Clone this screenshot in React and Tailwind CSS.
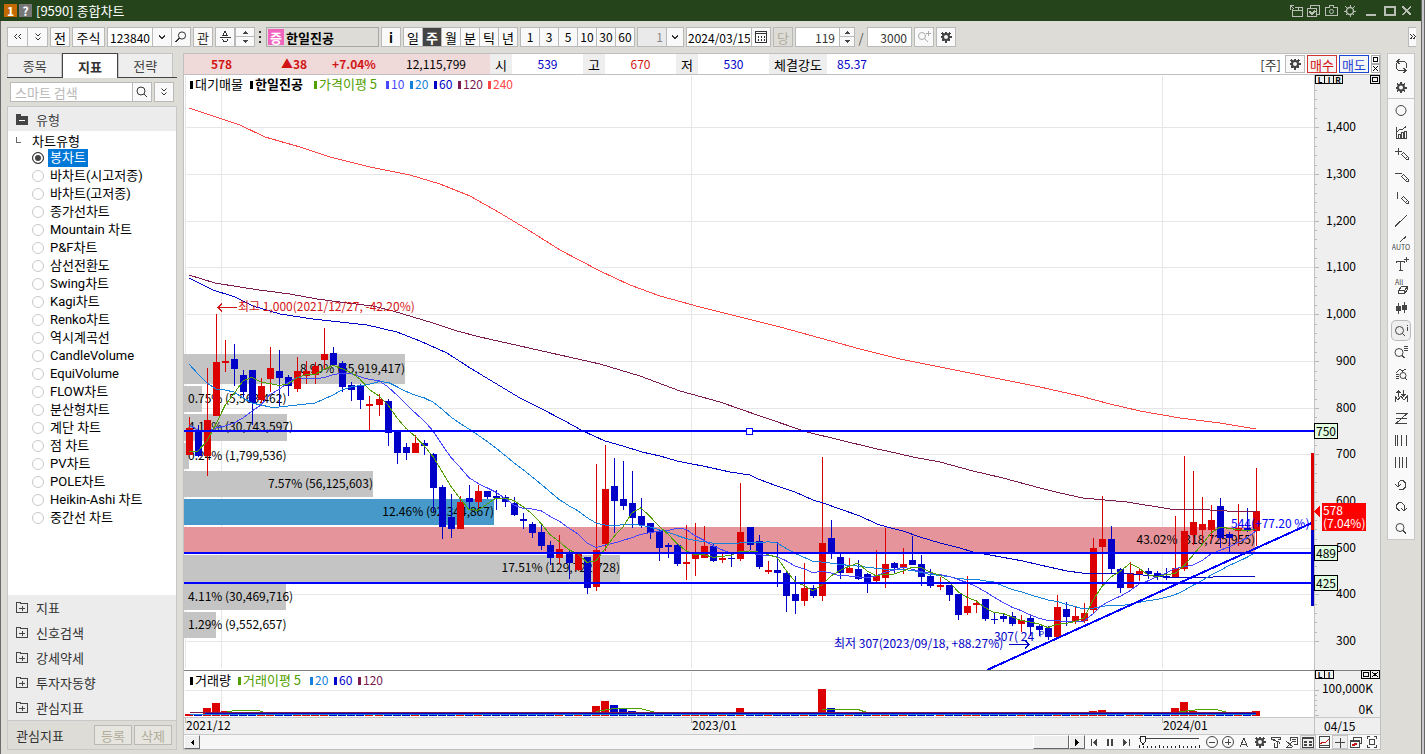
import { useState } from 'react';

const chartTypes = [
  '봉차트', '바차트(시고저종)', '바차트(고저종)', '종가선차트', 'Mountain 차트', 'P&F차트', '삼선전환도',
  'Swing차트', 'Kagi차트', 'Renko차트', '역시계곡선', 'CandleVolume', 'EquiVolume', 'FLOW차트',
  '분산형차트', '계단 차트', '점 차트', 'PV차트', 'POLE차트', 'Heikin-Ashi 차트', '중간선 차트',
];

const folders = ['지표', '신호검색', '강세약세', '투자자동향', '관심지표'];

// [up, high, low, body top, body bottom]
const candles = [
  [1, 417, 455, 428, 455], [0, 425, 457, 430, 456], [1, 368, 476, 420, 456], [1, 314, 416, 362, 416],
  [1, 340, 372, 361, 363], [0, 344, 386, 359, 369], [0, 370, 397, 375, 392], [0, 370, 425, 370, 403],
  [1, 378, 403, 386, 400], [1, 347, 392, 368, 379], [0, 350, 406, 371, 378], [0, 375, 396, 377, 386],
  [1, 357, 392, 371, 389], [1, 361, 384, 371, 376], [1, 362, 384, 366, 375], [1, 328, 369, 354, 360],
  [0, 347, 365, 353, 365], [0, 361, 392, 363, 387], [0, 382, 401, 385, 390], [0, 384, 409, 386, 400],
  [1, 396, 430, 404, 406], [1, 394, 416, 399, 405], [0, 399, 446, 401, 433], [0, 430, 464, 432, 453],
  [0, 443, 460, 447, 453], [1, 435, 453, 443, 453], [0, 440, 455, 443, 446], [0, 453, 512, 454, 488],
  [0, 485, 539, 487, 527], [0, 494, 538, 517, 529], [1, 496, 529, 502, 529], [0, 485, 509, 498, 502],
  [1, 485, 508, 491, 502], [0, 491, 499, 491, 497], [0, 490, 510, 496, 498], [0, 495, 507, 497, 502],
  [0, 497, 516, 503, 515], [0, 513, 529, 519, 521], [0, 522, 538, 524, 533], [0, 525, 550, 532, 546],
  [0, 541, 565, 545, 558], [1, 535, 564, 549, 558], [0, 549, 579, 552, 563], [1, 554, 571, 554, 570],
  [0, 557, 594, 557, 588], [1, 464, 591, 550, 587], [1, 445, 551, 489, 544], [0, 458, 533, 486, 501],
  [0, 461, 510, 499, 506], [0, 471, 528, 503, 518], [0, 498, 528, 516, 525], [0, 523, 539, 523, 533],
  [0, 530, 561, 531, 548], [0, 543, 558, 545, 547], [0, 544, 566, 545, 564], [1, 525, 580, 562, 564],
  [1, 523, 576, 554, 559], [1, 526, 558, 546, 558], [0, 543, 562, 546, 561], [1, 554, 563, 558, 560],
  [0, 554, 567, 558, 559], [1, 483, 561, 532, 559], [0, 527, 550, 527, 545], [0, 535, 569, 541, 567],
  [1, 561, 574, 570, 572], [0, 542, 587, 570, 573], [0, 572, 612, 573, 596], [0, 576, 614, 594, 601],
  [1, 563, 606, 588, 601], [0, 585, 598, 588, 596], [1, 457, 601, 543, 596], [0, 520, 559, 538, 552],
  [0, 554, 579, 557, 573], [1, 558, 573, 568, 573], [0, 560, 580, 569, 579], [0, 573, 593, 574, 583],
  [1, 550, 582, 576, 581], [1, 528, 588, 564, 578], [0, 562, 573, 563, 568], [1, 548, 574, 564, 568],
  [0, 536, 565, 560, 565], [0, 555, 586, 564, 577], [0, 569, 588, 576, 586], [1, 577, 590, 585, 587],
  [0, 585, 601, 585, 595], [0, 594, 620, 594, 615], [1, 576, 615, 606, 613], [1, 600, 613, 603, 605],
  [0, 599, 621, 599, 619], [0, 613, 624, 619, 620], [0, 613, 622, 616, 619], [0, 612, 626, 616, 624],
  [1, 615, 632, 620, 624], [0, 616, 636, 618, 627], [0, 625, 636, 626, 630], [0, 626, 640, 628, 637],
  [1, 595, 637, 607, 637], [0, 602, 626, 609, 617], [1, 607, 624, 616, 622], [1, 603, 623, 613, 621],
  [1, 538, 613, 548, 610], [1, 496, 585, 539, 547], [0, 526, 573, 539, 569], [0, 568, 593, 569, 588],
  [1, 562, 588, 573, 588], [1, 568, 581, 571, 575], [0, 568, 579, 571, 574], [0, 571, 580, 573, 577],
  [0, 568, 580, 576, 578], [1, 516, 578, 568, 578], [1, 456, 571, 531, 569], [1, 471, 545, 522, 535],
  [1, 497, 544, 524, 530], [1, 505, 540, 520, 530], [0, 498, 548, 506, 538], [0, 532, 552, 534, 538],
  [1, 504, 546, 528, 531], [0, 508, 532, 528, 530], [1, 468, 546, 511, 531],
];

const barX = (i) => 189 + Math.floor(i * 9.0484);
const closes = candles.map(([up, , , top, bottom]) => (up ? top : bottom));

// the first values come from bars that are not on the screen any more
const average = (n, head) =>
  closes
    .map((_, i) => {
      const y = i < head.length ? head[i] : closes.slice(i - n + 1, i + 1).reduce((a, b) => a + b, 0) / n;
      return `${barX(i)},${y.toFixed(1)}`;
    })
    .join(' ');

const ma5 = average(5, [451, 451, 441, 424]);
const ma10 = average(10, [425, 430, 432, 428, 426, 423, 418, 411, 405]);
const ma20 = average(20, [364, 374, 383, 389, 390, 392, 398, 403, 405, 407, 407, 406, 405, 404, 403, 399, 395, 390, 387]);
const ma60 =
  '189,278 213,290 235,297 253,306 280,314 313,319 340,322 367,325 397,332 420,341 447,353 467,366 480,374 500,386 520,398 540,408 563,420 583,431 605,441 623,446 642,452 660,456 677,461 692,464 703,466 730,472 750,475 758,479 777,486 795,492 813,500 823,503 840,509 860,516 877,524 887,527 903,531 920,537 940,543 960,548 973,552 990,555 1023,561 1040,565 1067,571 1082,573 1123,573 1143,575 1163,577 1183,578 1213,577 1256,576';
const ma120 =
  '189,275 215,283 240,287 259,290 290,294 317,299 347,303 373,306 393,311 413,317 433,323 457,331 480,337 520,346 560,355 600,364 640,376 680,391 720,402 760,416 807,432 840,440 877,449 887,451 913,457 940,462 973,471 1003,478 1040,488 1060,493 1083,498 1127,502 1170,509 1193,509 1227,511 1256,511';
const ma240 =
  '189,108 210,115 240,125 265,137 300,147 330,157 370,167 410,175 440,184 470,196 500,213 530,231 560,250 600,271 630,285 660,296 700,307 740,317 780,327 820,338 860,349 900,359 940,367 990,377 1040,387 1080,396 1110,404 1140,411 1180,418 1220,423 1256,429';

const lines = [
  { color: '#ff4646', points: ma240 },
  { color: '#7d1a50', points: ma120 },
  { color: '#0000c8', points: ma60 },
  { color: '#1482dc', points: ma20 },
  { color: '#4646ff', points: ma10 },
  { color: '#50a000', points: ma5 },
];

const profile = [
  { y: 354, h: 30, end: 405, color: '#c4c4c4', text: '8.90% (65,919,417)', base: 373 },
  { y: 386, h: 26, end: 202, color: '#c4c4c4', text: '0.75% (5,563,462)', base: 403 },
  { y: 414, h: 27, end: 287, color: '#c4c4c4', text: '4.16% (30,743,597)', base: 431 },
  { y: 443, h: 26, end: 189, color: '#c4c4c4', text: '0.24% (1,799,536)', base: 460 },
  { y: 471, h: 26, end: 373, color: '#c4c4c4', text: '7.57% (56,125,603)', base: 488 },
  { y: 499, h: 26, end: 494, color: '#4699c8', text: '12.46% (92,344,867)', base: 516 },
  { y: 527, h: 26, end: 1255, color: '#e6949b', text: '43.02% (318,725,955)', base: 544 },
  { y: 555, h: 27, end: 620, color: '#c4c4c4', text: '17.51% (129,722,728)', base: 572 },
  { y: 584, h: 26, end: 286, color: '#c4c4c4', text: '4.11% (30,469,716)', base: 601 },
  { y: 612, h: 26, end: 216, color: '#c4c4c4', text: '1.29% (9,552,657)', base: 629 },
];

const priceAxis = [
  [127, '1,400'], [174, '1,300'], [221, '1,200'], [267, '1,100'], [314, '1,000'], [361, '900'],
  [408, '800'], [454, '700'], [501, '600'], [548, '500'], [594, '400'], [641, '300'],
];

const volumes = {
  2: 8, 3: 13, 4: 5, 5: 4, 6: 3, 9: 3, 15: 4, 16: 3, 28: 3, 45: 10, 46: 15, 47: 11, 48: 8, 49: 5, 50: 3,
  61: 8, 62: 4, 70: 27, 71: 8, 72: 3, 77: 4, 80: 3, 96: 4, 100: 5, 101: 6, 109: 8, 110: 14, 111: 5,
  112: 3, 113: 3, 114: 3, 115: 3, 116: 3, 117: 3, 118: 5,
};

const priceLegend = [
  [190, '대기매물', '#000000'], [250, '한일진공', '#000000', true], [314, '가격이평 5', '#50a000'],
  [386, '10', '#4646ff'], [410, '20', '#1482dc'], [434, '60', '#0000c8'], [458, '120', '#7d1a50'],
  [488, '240', '#ff4646'],
];

const volumeLegend = [
  [190, '거래량', '#000000'], [238, '거래이평 5', '#50a000'], [310, '20', '#1482dc'],
  [334, '60', '#0000c8'], [358, '120', '#7d1a50'],
];

const Ico = ({ children, w = 16, h = 16, className = '' }) => (
  <svg
    width={w}
    height={h}
    viewBox={`0 0 ${w} ${h}`}
    fill="none"
    stroke="currentColor"
    shapeRendering="crispEdges"
    className={`shrink-0 [&_circle]:[shape-rendering:auto] ${className}`}
    aria-hidden="true"
  >
    {children}
  </svg>
);

const Gear = () => (
  <Ico w={12} h={12}>
    <path d="M6 0.5V11.5M0.5 6H11.5M2 2L10 10M10 2L2 10" strokeWidth="2" />
    <circle cx="6" cy="6" r="3" strokeWidth="2" fill="#f9f9f9" />
  </Ico>
);

const Lens = () => (
  <Ico w={12} h={12}>
    <circle cx="5" cy="5" r="4" />
    <path d="M8 8L11.5 11.5" />
  </Ico>
);

// search lens with the handle on the left
const LensLeft = () => (
  <Ico w={12} h={12}>
    <circle cx="7" cy="4.5" r="3.6" />
    <path d="M4.5 7L0.5 11" />
  </Ico>
);

const Chevron = () => (
  <Ico w={10} h={10}>
    <path d="M2 3.5L5 6.5L8 3.5" strokeWidth="2" />
  </Ico>
);

const DoubleDown = () => (
  <Ico w={6} h={8} className="[shape-rendering:auto]">
    <path d="M0.5 0.5L3 3L5.5 0.5M0.5 4.5L3 7L5.5 4.5" />
  </Ico>
);

const ToolButton = ({ label, className = '', children }) => (
  <button
    aria-label={label}
    className={`flex h-5 shrink-0 items-center justify-center border border-[#b9b9b9] bg-[#f9f9f9] text-[#333] ${className}`}
  >
    {children}
  </button>
);

const Spinner = ({ label, className }) => (
  <div className={`flex h-5 shrink-0 flex-col ${className}`}>
    <button aria-label={`${label} +`} className="flex h-2.5 items-center justify-center border border-[#b9b9b9] bg-[#f9f9f9] text-[#444]">
      <Ico w={8} h={4}><path d="M1 4L4 1L7 4Z" fill="currentColor" stroke="none" /></Ico>
    </button>
    <button aria-label={`${label} -`} className="flex h-2.5 items-center justify-center border border-t-0 border-[#b9b9b9] bg-[#f9f9f9] text-[#444]">
      <Ico w={8} h={4}><path d="M1 0L4 3L7 0Z" fill="currentColor" stroke="none" /></Ico>
    </button>
  </div>
);

const TitleBar = () => (
  <header className="flex h-[21px] items-center bg-[#25441c] pr-2 pl-1 text-white">
    <span className="flex size-[13px] items-center justify-center bg-[#c46a00] text-xs leading-none font-bold">1</span>
    <button className="ml-0.5 flex size-[13px] items-center justify-center bg-[#777] text-xs leading-none font-bold">?</button>
    <h1 className="ml-1 text-[13px] leading-5">[9590] 종합차트</h1>
    <div className="ml-auto flex items-center gap-1 text-[#b9bfb5]">
      <button aria-label="분리">
        <Ico w={14} h={12}><path d="M3 4V11.5H13.5V2.5H6M3.5 5.5H13M9.5 3V5M1.5 5V0.5H5M1.5 0.5L5 4" /></Ico>
      </button>
      <button aria-label="저장">
        <Ico w={14} h={12}><path d="M0.5 3.5H9.5V11.5H0.5ZM3.5 3V0.5H12.5V9.5H10" /><path d="M2.5 6.5L5 9L8 6" strokeWidth="2" /></Ico>
      </button>
      <button aria-label="캡처">
        <Ico w={14} h={12}><path d="M0.5 2.5H4.5V0.5H8.5V2.5H12.5V10.5H0.5Z" /><circle cx="6.5" cy="6.5" r="2" /></Ico>
      </button>
      <button aria-label="설정">
        <Ico w={14} h={12}><circle cx="7" cy="6" r="3.5" strokeWidth="1.5" /><path d="M7 0V2M7 10V12M1 6H3M11 6H13M2.5 1.5L4 3M10 9L11.5 10.5M11.5 1.5L10 3M2.5 10.5L4 9" /></Ico>
      </button>
      <button aria-label="최소화" className="ml-1">
        <Ico w={12} h={12}><path d="M1 10H11" strokeWidth="2" /></Ico>
      </button>
      <button aria-label="최대화" className="ml-0.5">
        <Ico w={14} h={12}><path d="M2 2H12V10H2Z" strokeWidth="2" /></Ico>
      </button>
      <button aria-label="닫기">
        <Ico w={12} h={12}><path d="M1.5 1.5L10 10M10 1.5L1.5 10" strokeWidth="2" /></Ico>
      </button>
    </div>
  </header>
);

const TopToolbar = () => {
  const [period, setPeriod] = useState('주');
  return (
    <div className="flex h-8 items-center gap-0.5 px-1.5 text-[13px] leading-none">
      <div className="flex">
        <ToolButton label="이전" className="w-[21px]"><Ico w={10} h={8} className="[shape-rendering:auto]"><path d="M4 1L1.5 3.5L4 6M8 1L5.5 3.5L8 6" /></Ico></ToolButton>
        <ToolButton label="아래로" className="-ml-px w-[21px]"><DoubleDown /></ToolButton>
      </div>
      <ToolButton className="w-5 text-black">전</ToolButton>
      <ToolButton className="w-[33px] text-black">주식</ToolButton>
      <div className="flex">
        <input aria-label="종목코드" defaultValue="123840" className="h-5 w-[46px] border border-[#b9b9b9] bg-white px-0.5 text-xs text-black" />
        <ToolButton label="종목 목록" className="-ml-px w-5"><Chevron /></ToolButton>
        <ToolButton label="종목 검색" className="-ml-px w-5"><LensLeft /></ToolButton>
      </div>
      <ToolButton className="w-5">관</ToolButton>
      <div className="flex">
        <ToolButton label="알림" className="w-5">
          <Ico w={12} h={12}><path d="M6 0.5L3.5 4.5H8.5ZM0.5 6.5H11.5M3.5 8.5L5 10.5H7.5L9 8.5" /></Ico>
        </ToolButton>
        <Spinner label="종목" className="w-5" />
        <ToolButton label="더보기" className="w-[9px] border-0 bg-transparent">
          <Ico w={4} h={14}><path d="M1 2H3M1 7H3M1 12H3" strokeWidth="2" /></Ico>
        </ToolButton>
      </div>
      <button className="flex h-5 w-[113px] shrink-0 items-center gap-0.5 border border-[#a8a8a8] bg-[#dddcd6] px-px font-bold text-black">
        <span className="flex size-4 items-center justify-center bg-[#f064be] text-white">증</span>
        한일진공
      </button>
      <ToolButton className="w-5 font-bold text-black">i</ToolButton>
      <div className="flex">
        {['일', '주', '월', '분', '틱', '년'].map((p, i) => (
          <button
            key={p}
            onClick={() => setPeriod(p)}
            className={`h-5 w-5 border border-[#b9b9b9] text-center ${i ? '-ml-px' : ''} ${period === p ? 'bg-[#444] font-bold text-white' : 'bg-[#f9f9f9] text-black'}`}
          >
            {p}
          </button>
        ))}
      </div>
      <div className="flex">
        {['1', '3', '5', '10', '30', '60'].map((n, i) => (
          <button key={n} className={`h-5 w-5 border border-[#b9b9b9] bg-[#f9f9f9] text-center text-xs leading-none text-black ${i ? '-ml-px' : ''}`}>
            {n}
          </button>
        ))}
      </div>
      <div className="relative flex">
        <select aria-label="주기" className="h-5 w-[47px] appearance-none border border-[#b9b9b9] bg-[#eaeaea] pr-5 text-xs text-[#888] [text-align-last:right]">
          <option>1</option>
        </select>
        <span className="pointer-events-none absolute right-0 flex h-5 w-[18px] items-center justify-center border border-[#b9b9b9] bg-[#f9f9f9] text-[#333]">
          <Chevron />
        </span>
      </div>
      <div className="flex">
        <input aria-label="날짜" defaultValue="2024/03/15" className="h-5 w-[66px] border border-[#b9b9b9] bg-white px-px text-xs text-black" />
        <ToolButton label="달력" className="-ml-px w-5">
          <Ico w={12} h={12}><path d="M0.5 0.5H11.5V11.5H0.5ZM0.5 2.5H11.5" /><path d="M3 5.5H10M3 8.5H10" strokeDasharray="1 2" strokeWidth="2" /></Ico>
        </ToolButton>
      </div>
      <ToolButton className="w-5 bg-transparent text-[#b0aca0]">당</ToolButton>
      <div className="flex">
        <input aria-label="봉 개수" defaultValue="119" className="h-5 w-[45px] border border-[#b9b9b9] bg-white px-1 text-right text-xs text-[#333]" />
        <Spinner label="봉 개수" className="-ml-px w-4" />
      </div>
      <span className="w-2 text-center text-[#555]">/</span>
      <input aria-label="전체 봉" defaultValue="3000" className="h-5 w-[45px] shrink-0 border border-[#b9b9b9] bg-white px-1 text-right text-xs text-[#333]" />
      <ToolButton label="확대" className="w-5 bg-[#efefef] text-[#aaa]">
        <Ico w={14} h={14}><circle cx="5" cy="6" r="3.5" /><path d="M7.5 8.5L11 12M11.5 1V6M9 3.5H14" /></Ico>
      </ToolButton>
      <ToolButton label="차트 설정" className="w-5 text-[#444]"><Gear /></ToolButton>
      <button aria-label="더 보기" className="-mr-px ml-auto flex h-5 w-2 items-center justify-center border border-r-0 border-[#b9b9b9] bg-[#f9f9f9] text-[#333]">
        <Ico w={6} h={6}><path d="M0.5 0.5L2.5 2.5L0.5 5M3.5 0.5L5.5 2.5L3.5 5" /></Ico>
      </button>
    </div>
  );
};

const Sidebar = () => {
  const [selected, setSelected] = useState('봉차트');
  return (
    <aside className="flex w-[170px] shrink-0 flex-col text-[13px] leading-none">
      <div role="tablist" className="flex h-[25px] border-b border-[#444] pr-1">
        <button role="tab" className="flex-1 border border-b-0 border-[#c4c4c4] bg-[#eee] text-[#444]">종목</button>
        <button role="tab" aria-selected="true" className="-mb-px flex-1 border border-b-0 border-[#444] bg-white font-bold text-[#333]">지표</button>
        <button role="tab" className="flex-1 border border-b-0 border-[#c4c4c4] bg-[#eee] text-[#444]">전략</button>
      </div>
      <div className="flex gap-0.5 px-[3px] py-1">
        <div className="flex flex-1">
          <input aria-label="스마트 검색" placeholder="스마트 검색" className="h-5 w-0 flex-1 border border-[#b9b9b9] bg-white px-1 placeholder:text-[#b8b8b8]" />
          <ToolButton label="검색" className="-ml-px w-5"><Lens /></ToolButton>
        </div>
        <ToolButton label="펼치기" className="w-5"><DoubleDown /></ToolButton>
      </div>
      <div className="flex flex-1 flex-col border border-[#c8c8c8] bg-white">
        <button className="flex h-6 items-center gap-2 bg-[#ececec] pl-2 text-[#444]">
          <svg width="12" height="11" viewBox="0 0 12 11" shapeRendering="crispEdges" aria-hidden="true">
            <path d="M0 0H5V2H12V11H0Z" fill="#444" />
            <path d="M3 6H9V7H3Z" fill="#fff" />
          </svg>
          유형
        </button>
        <div className="flex-1 text-black">
          <div className="flex h-[18px] items-center gap-2.5 pl-2">
            <Ico w={6} h={6} className="text-[#666]"><path d="M0.5 0V5.5H5" /></Ico>
            <span>차트유형</span>
          </div>
          {chartTypes.map((name) => (
            <label key={name} className="flex h-[18px] items-center gap-1 pl-6 font-[Roboto,'Noto_Sans_CJK_KR',sans-serif]">
              <input
                type="radio"
                name="chart-type"
                checked={selected === name}
                onChange={() => setSelected(name)}
                className="size-3 shrink-0 appearance-none rounded-full border border-[#c8c8c8] bg-white checked:border-[#333] checked:bg-[#444] checked:shadow-[inset_0_0_0_2px_white]"
              />
              <span className={`h-[18px] px-0.5 leading-[17px] whitespace-nowrap ${selected === name ? 'bg-[#0078d7] text-white' : ''}`}>
                {name}
              </span>
            </label>
          ))}
        </div>
        <div className="bg-[#ececec]">
          {folders.map((name) => (
            <button key={name} className="flex h-[25px] w-full items-center gap-2 pl-2 text-[#333]">
              <Ico w={12} h={12} className="text-[#444]"><path d="M0.5 0.5H4.5V1.5H11.5V10.5H0.5ZM3 6H9M6 3.5V9" /></Ico>
              {name}
            </button>
          ))}
        </div>
        <div className="flex h-[29px] items-center gap-0.5 border-t border-[#c8c8c8] bg-[#dddcd6] pr-1 pl-2 text-[#333]">
          <span className="mr-auto">관심지표</span>
          <button disabled className="h-5 w-[38px] border border-[#b9b9b9] bg-[#e6e5e0] text-[#b0ac98]">등록</button>
          <button disabled className="h-5 w-[38px] border border-[#b9b9b9] bg-[#e6e5e0] text-[#b0ac98]">삭제</button>
        </div>
      </div>
    </aside>
  );
};

const Quote = ({ label, value, className }) => (
  <>
    <dt className="flex w-[22px] items-center justify-center bg-[#eee] text-[13px]">{label}</dt>
    <dd className={`flex w-[71px] items-center justify-center ${className}`}>{value}</dd>
  </>
);

const InfoBar = () => (
  <div className="flex h-[22px] border-y border-[#c0c0c0] text-xs leading-none text-black">
    <div className="flex w-[306px] items-center bg-[#f0d9d9]">
      <strong className="w-[75px] text-center text-[#d21414]">578</strong>
      <strong className="w-[70px] text-center text-[#d21414]">▲38</strong>
      <strong className="w-[50px] text-center text-[#d21414]">+7.04%</strong>
      <span className="flex-1 pr-6 text-right">12,115,799</span>
    </div>
    <dl className="flex">
      <Quote label="시" value="539" className="text-[#0000c8]" />
      <Quote label="고" value="670" className="text-[#d21414]" />
      <Quote label="저" value="530" className="text-[#0000c8]" />
      <dt className="flex w-[58px] items-center justify-center bg-[#eee] text-[13px]">체결강도</dt>
      <dd className="flex items-center pl-2.5 text-[#0000c8]">85.37</dd>
    </dl>
    <div className="ml-auto flex items-center gap-0.5 text-[13px]">
      <span className="pr-0.5 text-[#333]">[주]</span>
      <button aria-label="설정" className="flex h-[18px] w-5 items-center justify-center border border-[#b9b9b9] bg-[#f9f9f9] text-[#444]"><Gear /></button>
      <button className="h-[18px] w-[30px] border border-[#d23232] bg-[#f6f6f6] text-[#d21414]">매수</button>
      <button className="h-[18px] w-[30px] border border-[#1e46d2] bg-[#f6f6f6] text-[#1e46d2]">매도</button>
      <div className="flex flex-col">
        <button aria-label="창 확대" className="flex size-[9px] items-center justify-center border border-[#aaa] bg-white"><Ico w={5} h={5}><path d="M0.5 0.5H4.5V4.5H0.5Z" /></Ico></button>
        <button aria-label="창 닫기" className="flex size-[9px] items-center justify-center border border-[#aaa] bg-white"><Ico w={5} h={5}><path d="M0 0L5 5M5 0L0 5" /></Ico></button>
      </div>
    </div>
  </div>
);

const Legend = ({ items, y }) =>
  items.map(([x, text, color, bold]) => (
    <g key={x} fill={color}>
      <rect x={x} y={y - 8} width="3" height="8" />
      <text x={x + 5} y={y} className={`${/[가-힣]/.test(text) ? 'text-[13px]' : 'text-xs'} ${bold ? 'font-bold' : ''}`}>{text}</text>
    </g>
  ));

const PriceTag = ({ y, text }) => (
  <g>
    <rect x="1314.5" y={y + 0.5} width="23" height="15" fill="#e1fbe1" stroke="#000" />
    <text x="1326" y={y + 13} textAnchor="middle">{text}</text>
  </g>
);

const MiniBox = ({ x, y, text }) => (
  <g>
    <rect x={x + 0.5} y={y + 0.5} width="9" height="8" fill="#efefef" stroke="#000" />
    {text === 'box' && <rect x={x + 2.5} y={y + 2.5} width="5" height="4" fill="none" stroke="#000" />}
    {text === 'x' && <path d={`M${x + 2} ${y + 2}l6 5m0 -5l-6 5`} stroke="#000" />}
    {text.length === 1 && text !== 'x' && (
      <text x={x + 5} y={y + 8} textAnchor="middle" className="text-[8px] font-bold">{text}</text>
    )}
  </g>
);

const Chart = () => (
  <svg viewBox="184 75 1196 659" className="block h-auto w-full overflow-visible text-xs" shapeRendering="crispEdges" role="img" aria-label="한일진공 주봉 차트">
    <rect x="184" y="75" width="1130" height="642" fill="#fff" />
    <rect x="1314" y="75" width="66" height="659" fill="#efefef" />
    <rect x="184" y="717" width="1196" height="17" fill="#efefef" />

    {/* grid */}
    <g fill="#e6e6e6">
      {[185, 221, 691, 1162].map((x) => <rect key={x} x={x} y="76" width="1" height="592" />)}
      {[221, 691, 1162].map((x) => <rect key={x} x={x} y="672" width="1" height="45" />)}
      {priceAxis.map(([y]) => <rect key={y} x="185" y={y} width="1129" height="1" />)}
      <rect x="185" y="690" width="1129" height="1" />
    </g>

    {profile.map((p) => <rect key={p.y} x="184" y={p.y} width={p.end - 184} height={p.h} fill={p.color} />)}
    {profile.map((p) =>
      p.end > 300 ? (
        <text key={p.y} x={p.end} y={p.base} textAnchor="end">{p.text}</text>
      ) : (
        <text key={p.y} x="188" y={p.base}>{p.text}</text>
      )
    )}

    {candles.map(([up, high, low, top, bottom], i) => (
      <g key={i} fill={up ? '#dc0000' : '#0000c8'}>
        <rect x={barX(i)} y={high} width="1" height={low - high} />
        <rect x={barX(i) - 3} y={top} width="7" height={bottom - top} />
      </g>
    ))}
    {lines.map((l) => <polyline key={l.color} points={l.points} fill="none" stroke={l.color} />)}

    <g stroke="#0000ff" strokeWidth="2">
      <path d="M184 431H1314M184 553H1314M184 583H1314M987 670L1314 522" />
      <rect x="746.5" y="428.5" width="6" height="6" fill="#fff" strokeWidth="1" />
    </g>
    <rect x="1311" y="453" width="3" height="77" fill="#dc0000" />
    <rect x="1311" y="530" width="3" height="76" fill="#0000c8" />

    <g fill="#d21414">
      <text x="238" y="311">최고 1,000(2021/12/27, -42.20%)</text>
      <path d="M237 307.5H218M222 303.5L218 307.5L222 311.5" fill="none" stroke="#d21414" />
    </g>
    <g fill="#0000c8">
      <text x="834" y="648">최저 307(2023/09/18, +88.27%)</text>
      <path d="M1009 644.5H1029M1025 640.5L1029 644.5L1025 648.5" fill="none" stroke="#0000c8" />
      <text x="994" y="641">307( 24</text>
      <text x="1039" y="637" className="text-[8px]">P</text>
      <text x="1231" y="528" fill="#0000ff">544(+77.20 %)</text>
    </g>

    <Legend items={priceLegend} y={89} />

    {/* price axis */}
    <rect x="1314" y="75" width="1" height="659" fill="#c0c0c0" />
    <g fill="#b8b8b8">
      {priceAxis.map(([y]) => (
        <g key={y}>
          <rect x="1315" y={y} width="4" height="1" />
          {[9, 19, 28, 37].map((d) => <rect key={d} x="1315" y={y - d} width="2" height="1" />)}
        </g>
      ))}
    </g>
    {priceAxis.map(([y, text]) => <text key={y} x="1356" y={y + 4} textAnchor="end">{text}</text>)}
    <PriceTag y={423} text="750" />
    <PriceTag y={545} text="489" />
    <PriceTag y={575} text="425" />
    <path d="M1314 511.5L1320 506V517Z" fill="#ff0000" />
    <rect x="1322" y="503" width="44" height="28" fill="#ff0000" />
    <text x="1323" y="515" fill="#fff">578</text>
    <text x="1323" y="528" fill="#fff">(7.04%)</text>
    <MiniBox x={1315} y={75} text="L" />
    <MiniBox x={1324} y={75} text="I" />
    <MiniBox x={1333} y={75} text="R" />
    <MiniBox x={1370} y={75} text="box" />

    {/* volume */}
    {candles.map(([up], i) => {
      const h = volumes[i] || (up ? 2 : 1);
      return <rect key={i} x={barX(i) - 4} y={716 - h} width="8" height={h} fill={up ? '#dc0000' : '#0000c8'} />;
    })}
    <path d="M190 714.5H1256" stroke="#1482dc" />
    <path d="M225 712.5L234 710.5H258L268 713.5M596 711.5L614 708.5H640L660 713.5M822 709.5H858L870 713.5M1106 712.5H1135M1175 712.5L1190 710.5L1200 709.5H1216L1228 712.5" fill="none" stroke="#50a000" />
    <path d="M190 712.5H1256" stroke="#7d1a50" />
    <path d="M205 713.5H1256" stroke="#0000c8" />
    <Legend items={volumeLegend} y={685} />
    <text x="1373" y="693" textAnchor="end">100,000K</text>
    <text x="1373" y="714" textAnchor="end">0K</text>
    <path d="M1315 690.5H1319M1315 695.5H1317M1315 700.5H1317M1315 705.5H1317M1315 710.5H1317M1315 715.5H1319" stroke="#b8b8b8" />

    <rect x="184" y="670" width="1196" height="1" fill="#808080" />
    <MiniBox x={1315} y={670} text="L" />
    <MiniBox x={1324} y={670} text="I" />
    <MiniBox x={1361} y={670} text="box" />
    <MiniBox x={1370} y={670} text="x" />

    {/* dates */}
    <rect x="184" y="717" width="1196" height="1" fill="#c8c8c8" />
    <g fill="#b8b8b8">
      {[185, 691, 1162].map((x) => <rect key={x} x={x} y="718" width="1" height="5" />)}
    </g>
    <text x="186" y="730">2021/12</text>
    <text x="692" y="730">2023/01</text>
    <text x="1163" y="730">2024/01</text>
    <text x="1324" y="731">04/15</text>
  </svg>
);

const bottomIcons = [
  ['축소', <><circle cx="8" cy="7" r="5.5" /><path d="M5 7H11" /></>],
  ['확대', <><circle cx="8" cy="7" r="5.5" /><path d="M5 7H11M8 4V10" /></>],
  ['글자', <path d="M4 12L8 3L11.5 12M5 9.5H11" />],
  ['설정', <><path d="M8 1.5V12.5M2.5 7H13.5M4 3L12 11M12 3L4 11" strokeWidth="2" /><circle cx="8" cy="7" r="3" strokeWidth="2" fill="#f9f9f9" /></>],
  ['도구', <path d="M3.5 4.5V2.5H12.5V4.5H10M3.5 4.5H6.5M5.5 5L10.5 7M6.5 7.5V12.5H9.5V7M11.5 6.5V9" />],
  ['지우기', <path d="M6.5 6V2.5H13.5V9.5H9.5M8 4.5H12M9 6.5H12M2 6L9 12M9 6L3 12M2 12.5H8" />],
  ['표', <><path d="M2.5 2.5H13.5V12.5H2.5ZM3 3.5H13" /><path d="M4 6.5H7M4 9.5H7M9 6.5H12M9 9.5H12" strokeWidth="2" /></>, true],
  ['비교', <><path d="M3.5 1.5H13.5V12.5H3.5Z" /><path d="M4 9L7 7L9 8L13 4" stroke="#c81414" /><path d="M4 10.5H13" /></>],
  ['십자선', <path d="M3 7.5H13M8 3V12.5" />, true],
  ['창 배열', <><path d="M5.5 5V2.5H13.5V8.5H12M2.5 5.5H11.5V12.5H2.5ZM3 6.5H11" /><path d="M4 10.5L9 8.5" stroke="#c81414" strokeWidth="2" /></>],
  ['전체 화면', <path d="M3.5 4V1.5H6M10 1.5H12.5V4M3.5 10V12.5H6M10 12.5H12.5V10M5.5 4.5H10.5V9.5H5.5Z" />],
];

const BottomBar = () => (
  <div className="flex h-[15px] border-t border-[#c8c8c8] bg-[#f9f9f9] text-[#444]">
    <div className="flex flex-1 justify-between bg-[#f6f6f6]">
      <button aria-label="왼쪽" className="flex w-4 items-center justify-center border border-r-[#666] border-b-[#666] border-l-white border-t-white bg-[#efefef] text-black">
        <Ico w={4} h={7}><path d="M4 0V7L0.5 3.5Z" fill="currentColor" stroke="none" /></Ico>
      </button>
      <div className="flex">
        <div className="w-9 border border-t-white border-r-[#666] border-b-[#666] border-l-white bg-[#efefef]" />
        <button aria-label="오른쪽" className="flex w-4 items-center justify-center border border-r-[#666] border-b-[#666] border-l-white border-t-white bg-[#efefef] text-black">
          <Ico w={4} h={7}><path d="M0 0V7L3.5 3.5Z" fill="currentColor" stroke="none" /></Ico>
        </button>
      </div>
    </div>
    <div className="flex items-center">
      <button aria-label="처음"><Ico h={14}><path d="M6.5 4V11" /><path d="M12 4V11L8 7.5Z" fill="currentColor" stroke="none" /></Ico></button>
      <button aria-label="정지"><Ico h={14}><path d="M7 4V11M11 4V11" strokeWidth="2" /></Ico></button>
      <button aria-label="끝"><Ico h={14}><path d="M12.5 4V11" /><path d="M6 4V11L10 7.5Z" fill="currentColor" stroke="none" /></Ico></button>
    </div>
    <div className="relative w-[71px]">
      <svg width="71" height="14" viewBox="0 0 71 14" fill="none" stroke="#222" shapeRendering="crispEdges" aria-hidden="true">
        <path d="M6 3.5H66" stroke="#444" />
        {Array.from({ length: 16 }, (_, i) => (
          <path key={i} d={`M${6.5 + i * 4} ${i % 5 ? 11 : 10}V13`} />
        ))}
        <path d="M7.5 1.5H12.5V6.5L10 9.5L7.5 6.5Z" fill="#f9f9f9" />
      </svg>
      <input type="range" aria-label="속도" defaultValue="5" className="absolute inset-0 h-full w-full opacity-0" />
    </div>
    {bottomIcons.map(([label, icon, boxed]) => (
      <button key={label} aria-label={label} className={boxed ? 'w-4 bg-[#efefef] ring-1 ring-[#c4c4c4] ring-inset' : 'w-4'}>
        <Ico h={14}>{icon}</Ico>
      </button>
    ))}
  </div>
);

const pencil = <path d="M9.5 9.5L11.5 7.5L16.5 12.5V14.5H14.5ZM13.5 13.5L15.5 11.5" />;

const sideIcons = [
  ['새로고침', <path d="M5 5.5H12.5L14.5 7.5V12M4.5 7V12.5L6.5 14.5H14M7.5 3L5 5.5L7.5 8M11.5 12L14 14.5L11.5 17" />],
  ['설정', <><path d="M9 4V15M3.5 9.5H14.5M5 5.5L13 13.5M13 5.5L5 13.5" strokeWidth="2" /><circle cx="9" cy="9.5" r="3" strokeWidth="2" fill="#f9f9f9" /></>],
  ['원', <circle cx="9" cy="9.5" r="5" />],
  ['차트', <path d="M4.5 4V15.5H15M6.5 15V11.5H8.5V15M9.5 15V9.5H11.5V15M12.5 15V8.5H14.5V15M5 9L8 6L10 7L14 3.5" />],
  ['십자 추가', <><path d="M3 6.5H10M6.5 3V10" />{pencil}</>],
  ['수평선', <><path d="M3 6.5H10" />{pencil}</>],
  ['수직선', <><path d="M5.5 3V10" />{pencil}</>],
  ['추세선', <path d="M3 15.5L15 4" />],
  ['자동추세선', <><path d="M8 9L14 3.5" /><text x="9" y="17" textAnchor="middle" fill="currentColor" stroke="none" className="text-[7px]">AUTO</text></>],
  ['문자', <><path d="M4.5 8V6.5H12.5V8M8.5 7V15M6.5 15.5H11M14.5 2V7M12 4.5H17" /></>],
  ['모두 지우기', <><text x="3" y="8" fill="currentColor" stroke="none" className="text-[7px]">All</text><path d="M6.5 13.5L9.5 9.5H15.5V12.5L12.5 16.5H6.5ZM6.5 13.5H12.5L15.5 9.5M12.5 13.5V16" /></>],
  ['봉', <><path d="M6.5 4V15M12.5 3V14" /><path d="M4 7H9V12H4ZM10 6H15V11H10Z" fill="currentColor" stroke="none" /></>],
  ['정보 검색', <><circle cx="7.5" cy="9.5" r="4" /><path d="M10.5 12.5L13 15M15.5 6V10M15.5 3.5V4.5" /></>, true],
  ['목록 검색', <><circle cx="7" cy="9.5" r="4" /><path d="M10 12.5L12.5 15M12 3.5H16M12 5.5H16M12 7.5H16" /></>],
  ['패턴 검색', <><path d="M4 8L8 4L10.5 6L14.5 3.5M4 9.5H7M4 11.5H7M4 13.5H7" /><circle cx="11" cy="10.5" r="3" /><path d="M13 12.5L15.5 15.5" /></>],
  ['파동', <path d="M3.5 15V10L6 13L9 9L12 13L15.5 9V15M6.5 10V4M4.5 6L6.5 4L8.5 6M11.5 3V9M9.5 7L11.5 9L13.5 7" />],
  ['지그재그', <path d="M4 4.5H15L4 14.5H15M4 9.5H15" />],
  ['비율선', <path d="M3.5 4V15M5.5 4V15M9.5 4V15M14.5 4V15" />],
  ['주기선', <path d="M3.5 4V15M7.5 4V15M10.5 4V15M14.5 4V15" />],
  ['되돌리기', <path d="M7 14.5H11L13.5 12V8L11 5.5H8.5L6 8V12M3.5 9.5L6 12L8.5 9.5" />],
  ['다시하기', <path d="M8 13.5H7L4.5 11V8L7 5.5H9.5L12 8V13M9.5 11.5L12 14L14.5 11.5" />],
  ['돋보기', <><circle cx="8" cy="8.5" r="4" /><path d="M11 11.5L14 14.5" /></>],
];

const SideTools = () => (
  <nav className="flex w-7 shrink-0 flex-col self-start border border-[#c8c8c8] bg-[#f9f9f9] text-[#444]">
    {sideIcons.map(([label, icon, active], i) => (
      <button key={label} aria-label={label} className={`flex items-center justify-center ${i === 1 ? 'h-[23px] border-b border-[#c8c8c8]' : 'h-[22px]'}`}>
        <span className={active ? 'rounded-sm bg-[#efefef] ring-1 ring-[#b9b9b9]' : ''}>
          <Ico w={18} h={19}>{icon}</Ico>
        </span>
      </button>
    ))}
  </nav>
);

const App = () => {
  return (
    <div className="min-h-screen border-r border-[#666] bg-[#c8c8cc] pr-0.5 font-['Noto_Sans_CJK_KR',sans-serif]">
      <div className="flex min-h-screen flex-col border-r border-[#666] bg-[#dddcd6]">
        <TitleBar />
        <div className="flex flex-1 flex-col border-l border-[#6b6b6b]">
          <TopToolbar />
          <div className="flex flex-1 gap-1.5 px-1.5 pb-1">
            <Sidebar />
            <main className="min-w-0 flex-1 self-start border-x border-b border-[#c0c0c0] bg-white">
              <InfoBar />
              <Chart />
              <BottomBar />
            </main>
            <SideTools />
          </div>
        </div>
      </div>
    </div>
  );
};

export default App;
